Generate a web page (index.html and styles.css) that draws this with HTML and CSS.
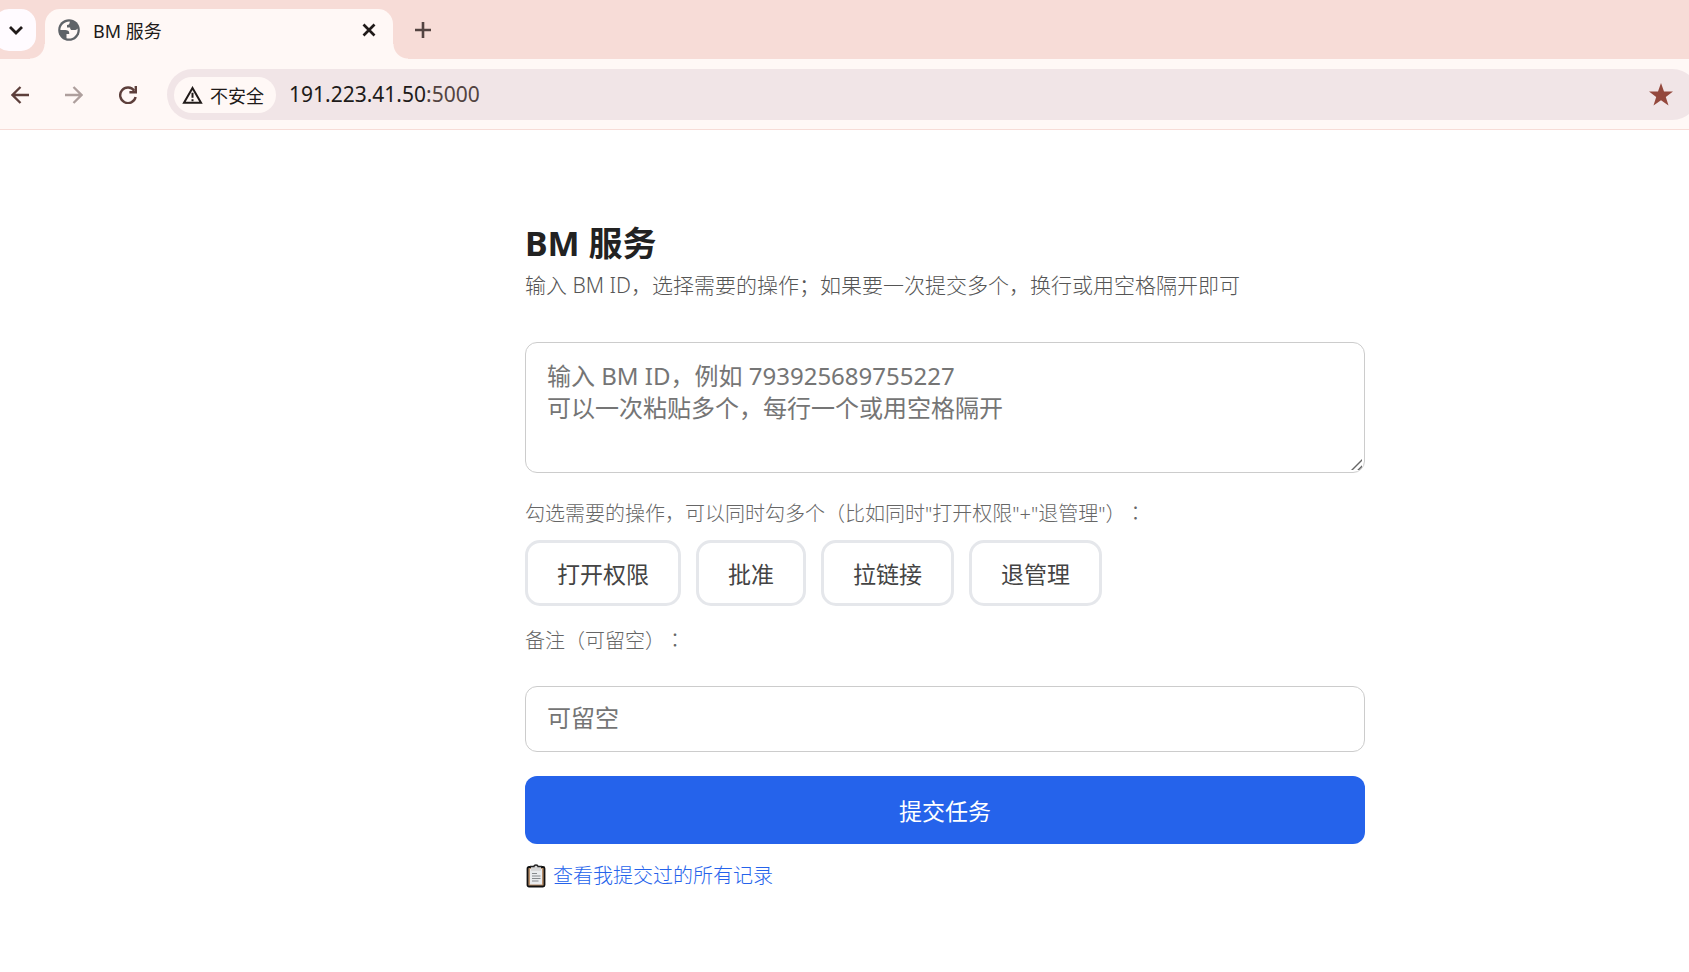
FILE: index.html
```html
<!DOCTYPE html>
<html lang="zh-CN">
<head>
<meta charset="utf-8">
<title>BM 服务</title>
<link rel="stylesheet" href="styles.css">
</head>
<body>
<header class="browser">
  <div class="tab-strip">
    <button class="tab-search" type="button" aria-label="搜索标签页">
      <svg width="16" height="16" viewBox="0 0 16 16" fill="none" stroke="#201a19" stroke-width="2.8"><path d="M2 5l6 6 6-6"/></svg>
    </button>
    <div class="tab">
      <svg class="tab-globe" width="22" height="22" viewBox="0 0 22 22"><circle cx="11" cy="11" r="10.8" fill="#5f6368"/><path fill="#fff8f6" d="M11.800 2.400C6.800 2.200 2.400 6 2.400 11h4.800c2.400 0 4 .9 4 2.700v1.300H8.500v4.200c5.600 1.700 11-2.500 11.100-8.200 0-.6 0-1.100-.1-1.600-.7 1.300-1.800 1.700-3.100 1.700h-2c-1.900 0-2.300-1.200-2.300-2.600H9V5.900c1.900 0 2.700-1 2.800-3.500z"/></svg>
      <span class="tab-title">BM 服务</span>
      <button class="icon-button" type="button" aria-label="关闭标签页">
        <svg width="14" height="14" viewBox="0 0 14 14" fill="none" stroke="#201a19" stroke-width="2.700"><path d="M1.500 1.500l11 11M12.500 1.500l-11 11"/></svg>
      </button>
    </div>
    <button class="icon-button new-tab" type="button" aria-label="新标签页">
      <svg width="16" height="16" viewBox="0 0 16 16" fill="none" stroke="#534341" stroke-width="2.600"><path d="M8 0v16M0 8h16"/></svg>
    </button>
  </div>
  <div class="toolbar">
    <nav class="nav-buttons">
      <button class="icon-button" type="button" aria-label="后退">
        <svg width="18" height="18" viewBox="0 0 18 18" fill="none" stroke="#5d3f3b" stroke-width="2.300"><path d="M18 9H1.500M9.500 1L1.500 9l8 8"/></svg>
      </button>
      <button class="icon-button" type="button" aria-label="前进" disabled>
        <svg width="18" height="18" viewBox="0 0 18 18" fill="none" stroke="#ae9f9d" stroke-width="2.300"><path d="M0 9h16.500M8.500 1l8 8-8 8"/></svg>
      </button>
      <button class="icon-button" type="button" aria-label="重新加载">
        <svg width="18" height="18" viewBox="0 0 18 18" fill="none" stroke="#5d3f3b" stroke-width="2.400"><path d="M15.300 4.700A7.800 7.800 0 1 0 16.600 11"/><path d="M16.800 0v6.200h-6.400"/></svg>
      </button>
    </nav>
    <div class="omnibox">
      <button class="security" type="button">
        <svg width="21" height="18" viewBox="0 0 21 18" fill="none" stroke="#201a19" stroke-width="2"><path d="M10.500 2L2 16.800h17z"/><path d="M10.500 6.800v5M10.500 13.300v2"/></svg>
        <span>不安全</span>
      </button>
      <div class="url">191.223.41.50<span class="url-port">:5000</span></div>
      <button class="icon-button" type="button" aria-label="收藏">
        <svg width="24" height="23" viewBox="0 0 24 23" fill="#94483d"><path d="M12 0l3 8.400 9 .1-7.200 5.400 2.700 8.600L12 17.300l-7.500 5.200 2.700-8.600L0 8.500l9-.1z"/></svg>
      </button>
    </div>
  </div>
</header>
<main class="page">
  <form class="task-form">
    <h1 class="title">BM 服务</h1>
    <p class="subtitle">输入 BM ID，选择需要的操作；如果要一次提交多个，换行或用空格隔开即可</p>
    <textarea class="field ids" aria-label="BM ID" placeholder="输入 BM ID，例如 793925689755227&#10;可以一次粘贴多个，每行一个或用空格隔开"></textarea>
    <p class="hint">勾选需要的操作，可以同时勾多个（比如同时"打开权限"+"退管理"）<span class="colon" lang="zh-TW">：</span></p>
    <div class="choices">
      <button class="choice" type="button">打开权限</button>
      <button class="choice" type="button">批准</button>
      <button class="choice" type="button">拉链接</button>
      <button class="choice" type="button">退管理</button>
    </div>
    <label class="hint" for="remark">备注（可留空）<span class="colon" lang="zh-TW">：</span></label>
    <input class="field remark" id="remark" type="text" placeholder="可留空">
    <button class="submit" type="submit">提交任务</button>
    <div class="records">
      <svg width="20" height="24" viewBox="0 0 20 24"><rect x="1.500" y="3" width="17" height="19.500" rx="1.500" fill="#b98f6a" stroke="#111" stroke-width="1.800"/><path d="M4 5h12v15.500H4z" fill="#e9ebee"/><path d="M5 2.800h3a2 2 0 0 1 4 0h3v4H5z" fill="#d5d5d5"/><path d="M4 2.500h4q0-1.500 2-1.500t2 1.500h4" fill="none" stroke="#222" stroke-width="1.300"/><path d="M6 9.500h5M6 12h8.500M6 14.500h8.500M6 17h6.500" stroke="#85898d" stroke-width="1.200"/></svg>
      <a class="records-link" href="#records">查看我提交过的所有记录</a>
    </div>
  </form>
</main>
</body>
</html>
```
FILE: styles.css
```css
* { box-sizing: border-box; }

body {
  margin: 0;
  background: #fff;
  color: #222;
  font-family: "Noto Sans", "Noto Sans CJK SC", sans-serif;
  text-spacing-trim: space-all;
  overflow-x: hidden;
}

button, input, textarea { font-family: inherit; }
button { border: 0; padding: 0; background: none; color: inherit; }
svg { display: block; flex: none; }

.browser {
  overflow: hidden;
  background: #fff8f6;
  border-bottom: 1px solid #f7dcd7;
}

.tab-strip {
  display: flex;
  height: 59px;
  padding-top: 9px;
  background: #f7dcd7;
}

.tab-search {
  display: grid;
  place-items: center;
  width: 42px;
  height: 42px;
  margin-left: -6px;
  padding-left: 2px;
  border-radius: 15px;
  background: #fffbff;
}

.tab {
  position: relative;
  display: flex;
  align-items: center;
  gap: 13px;
  width: 348px;
  height: 50px;
  margin-left: 9px;
  padding: 0 17px 8px 13px;
  border-radius: 15px 15px 0 0;
  background: #fff8f6;
}

.tab::before,
.tab::after {
  content: "";
  position: absolute;
  bottom: 0;
  width: 15px;
  height: 15px;
}

.tab::before {
  right: 100%;
  background: radial-gradient(circle at 0 0, transparent 14px, #fff8f6 15px);
}

.tab::after {
  left: 100%;
  background: radial-gradient(circle at 100% 0, transparent 14px, #fff8f6 15px);
}

.tab-title {
  flex: 1;
  font-size: 18px;
  color: #201a19;
}

.icon-button {
  display: grid;
  place-items: center;
}

.new-tab {
  height: 42px;
  margin-left: 22px;
}

.toolbar {
  display: flex;
  align-items: center;
  gap: 30px;
  height: 70px;
  padding: 1px 0 0 11px;
}

.nav-buttons {
  display: flex;
  gap: 36px;
}

.omnibox {
  flex: 1;
  display: flex;
  align-items: center;
  height: 51px;
  margin-right: -9px;
  padding: 0 25px 0 7px;
  border-radius: 26px;
  background: #f1e5e7;
}

.security {
  display: flex;
  align-items: center;
  gap: 7px;
  height: 36px;
  padding: 0 12px 0 8px;
  border-radius: 18px;
  background: #fff8f6;
  font-size: 18px;
  color: #201a19;
}

.url {
  flex: 1;
  margin-left: 13px;
  padding-bottom: 2px;
  font-size: 21px;
  line-height: 28px;
  color: #201a19;
}

.url-port { color: #534341; }

.page { padding: 91px 0 72px 201px; }

.task-form {
  display: flex;
  flex-direction: column;
  max-width: 840px;
  margin: 0 auto;
}

.title {
  margin: 0;
  font-size: 34px;
  line-height: 44px;
}

.subtitle {
  margin: 5px 0 42px;
  font-size: 21px;
  line-height: 30px;
  font-weight: 300;
  color: #555;
}

.field {
  width: 100%;
  padding: 17px 21px;
  border: 1px solid #ccc;
  border-radius: 12px;
  background: #fff;
  font-size: 24px;
  line-height: 32px;
}

.field::placeholder { color: #757575; }

.ids {
  height: 131px;
  margin-bottom: 26px;
  resize: vertical;
}

.ids::-webkit-resizer {
  background:
    linear-gradient(135deg,
      transparent 48%, #666 52%, #666 57%, transparent 61%,
      transparent 76%, #666 80%, #666 85%, transparent 89%)
    2px 2px / 11px 11px no-repeat;
}

.hint {
  margin: 0;
  font-size: 20px;
  line-height: 30px;
  font-weight: 300;
  color: #666;
}

/* Traditional Chinese glyphs centre the colon in its cell. */
.colon {
  font-family: "Noto Sans CJK TC", sans-serif;
  line-height: 1;
}

.choices {
  display: flex;
  flex-wrap: wrap;
  gap: 15px;
  margin: 11px 0 20px;
}

.choice {
  height: 66px;
  padding: 0 29px;
  border: 3px solid #e5e7eb;
  border-radius: 15px;
  background: #fff;
  font-size: 23px;
  color: #444;
}

.remark {
  height: 66px;
  margin: 30px 0 24px;
  padding: 14px 21px 18px;
}

.submit {
  height: 68px;
  border-radius: 12px;
  background: #2563eb;
  font-size: 23px;
  color: #fff;
}

.records {
  display: flex;
  align-items: center;
  gap: 7px;
  margin-top: 17px;
  padding-left: 1px;
}

.records-link {
  font-size: 20px;
  line-height: 30px;
  font-weight: 300;
  color: #2563eb;
  text-decoration: none;
}
```
